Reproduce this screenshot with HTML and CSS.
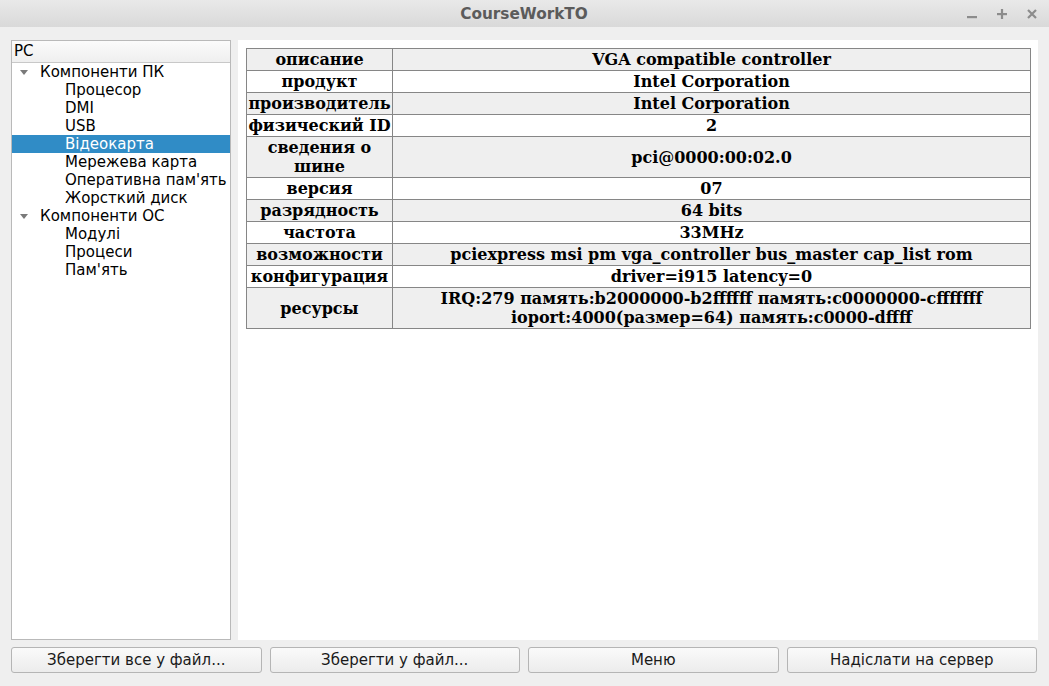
FILE: index.html
```html
<!DOCTYPE html>
<html lang="uk">
<head>
<meta charset="utf-8">
<title>CourseWorkTO</title>
<link rel="stylesheet" href="styles.css">
</head>
<body>
<div class="window">
  <div class="titlebar">
    <span class="title">CourseWorkTO</span>
    <div class="controls">
      <svg class="ctl" width="12" height="12" viewBox="0 0 12 12"><rect x="1" y="8" width="10" height="2.2" fill="#8c8c8c"/></svg>
      <svg class="ctl" width="12" height="12" viewBox="0 0 12 12"><rect x="1" y="5" width="10" height="2.2" fill="#8c8c8c"/><rect x="4.9" y="1" width="2.2" height="10" fill="#8c8c8c"/></svg>
      <svg class="ctl" width="12" height="12" viewBox="0 0 12 12"><path d="M2 2 L10 10 M10 2 L2 10" stroke="#8c8c8c" stroke-width="2.2"/></svg>
    </div>
  </div>
  <div class="main">
    <div class="tree">
      <div class="tree-header">PC</div>
      <div class="row lvl1"><span class="arrow"></span>Компоненти ПК</div>
      <div class="row lvl2">Процесор</div>
      <div class="row lvl2">DMI</div>
      <div class="row lvl2">USB</div>
      <div class="row lvl2 selected">Відеокарта</div>
      <div class="row lvl2">Мережева карта</div>
      <div class="row lvl2">Оперативна пам'ять</div>
      <div class="row lvl2">Жорсткий диск</div>
      <div class="row lvl1"><span class="arrow"></span>Компоненти ОС</div>
      <div class="row lvl2">Модулі</div>
      <div class="row lvl2">Процеси</div>
      <div class="row lvl2">Пам'ять</div>
    </div>
    <div class="content">
      <table class="info">
        <tr class="alt"><th>описание</th><td>VGA compatible controller</td></tr>
        <tr><th>продукт</th><td>Intel Corporation</td></tr>
        <tr class="alt"><th>производитель</th><td>Intel Corporation</td></tr>
        <tr><th>физический ID</th><td>2</td></tr>
        <tr class="alt"><th>сведения о<br>шине</th><td>pci@0000:00:02.0</td></tr>
        <tr><th>версия</th><td>07</td></tr>
        <tr class="alt"><th>разрядность</th><td>64 bits</td></tr>
        <tr><th>частота</th><td>33MHz</td></tr>
        <tr class="alt"><th>возможности</th><td>pciexpress msi pm vga_controller bus_master cap_list rom</td></tr>
        <tr><th>конфигурация</th><td>driver=i915 latency=0</td></tr>
        <tr class="alt"><th>ресурсы</th><td>IRQ:279 память:b2000000-b2ffffff память:c0000000-cfffffff<br>ioport:4000(размер=64) память:c0000-dffff</td></tr>
      </table>
    </div>
  </div>
  <div class="buttons">
    <button class="btn">Зберегти все у файл...</button>
    <button class="btn">Зберегти у файл...</button>
    <button class="btn">Меню</button>
    <button class="btn">Надіслати на сервер</button>
  </div>
</div>
</body>
</html>
```
FILE: styles.css
```css
* { box-sizing: border-box; }
html, body {
  margin: 0;
  padding: 0;
  width: 1049px;
  height: 686px;
  overflow: hidden;
  background: #efefef;
  font-family: "DejaVu Sans", sans-serif;
  font-size: 15px;
  color: #000;
}
.window {
  display: flex;
  flex-direction: column;
  width: 1049px;
  height: 686px;
}
.titlebar {
  position: relative;
  height: 27px;
  flex: none;
  background: linear-gradient(#e9e9e9, #d9d9d9);
  display: flex;
  align-items: center;
  justify-content: center;
}
.title {
  font-weight: bold;
  font-size: 15.3px;
  color: #5b5b5b;
  margin-left: -1px;
}
.controls {
  position: absolute;
  right: 11px;
  top: 8px;
  display: flex;
  gap: 18px;
}
.ctl { display: block; }
.main {
  flex: 1;
  display: flex;
  gap: 7px;
  padding: 13px 11px 0 11px;
  min-height: 0;
}
.tree {
  width: 220px;
  flex: none;
  background: #fff;
  border: 1px solid #b9b9b9;
  height: 600px;
}
.tree-header {
  height: 22px;
  line-height: 20px;
  padding-left: 2px;
  background: linear-gradient(#fbfbfb, #efefef);
  border-bottom: 1px solid #c8c8c8;
  font-size: 15px;
}
.row {
  height: 18px;
  line-height: 18px;
  white-space: nowrap;
  font-size: 15px;
  display: flex;
  align-items: center;
}
.lvl1 { padding-left: 8px; }
.lvl2 { padding-left: 53px; }
.arrow {
  width: 0;
  height: 0;
  border-left: 4.5px solid transparent;
  border-right: 4.5px solid transparent;
  border-top: 5px solid #7a7a7a;
  margin-right: 12px;
}
.selected {
  background: #308cc6;
  color: #fff;
}
.content {
  width: 800px;
  height: 600px;
  flex: none;
  background: #fff;
  padding: 8px;
}
.info {
  width: 785px;
  border-collapse: collapse;
  font-family: "DejaVu Serif", serif;
  font-weight: bold;
  font-size: 16px;
  line-height: 19px;
}
.info th, .info td {
  border: 1px solid #868686;
  padding: 1px 0;
  text-align: center;
  vertical-align: middle;
  font-weight: bold;
}
.info th { width: 146px; }
.info tr { background: #fff; }
.info tr.alt { background: #efefef; }
.buttons {
  flex: none;
  display: grid;
  grid-template-columns: repeat(4, 1fr);
  gap: 8px;
  padding: 7px 12px 13px 11px;
}
.btn {
  height: 26px;
  font-family: "DejaVu Sans", sans-serif;
  font-size: 15px;
  color: #1a1a1a;
  background: linear-gradient(#fafafa, #ececec);
  border: 1px solid #b5b5b5;
  border-radius: 3px;
  padding: 0;
}
```
